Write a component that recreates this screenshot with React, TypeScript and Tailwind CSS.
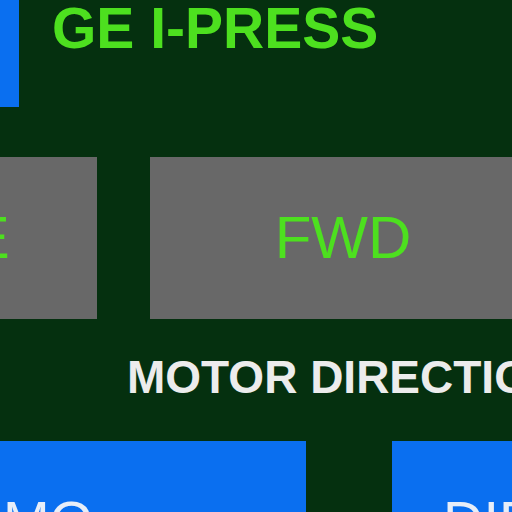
export default function App() {
  return (
    <div className="w-[512px] h-[512px] overflow-hidden bg-[#05300f] font-['Liberation_Sans',Arial,sans-serif]">
      <div className="flex h-[107px] items-start">
        <div className="w-[19px] h-[107px] bg-[#0a6ff0] shrink-0" />
        <div className="ml-[33px] text-[57px] leading-none font-bold text-[#4de01f] whitespace-nowrap">
          GE I-PRESS
        </div>
      </div>
      <div className="mt-[50px] flex gap-[53px] h-[162px] -ml-[364px]">
        <div className="w-[461px] shrink-0 bg-[#686868] flex items-center justify-center text-[60px] text-[#4de01f] leading-none whitespace-nowrap">
          REVERSE
        </div>
        <div className="w-[386px] shrink-0 bg-[#686868] flex items-center justify-center text-[60px] text-[#4de01f] leading-none">
          FWD
        </div>
      </div>
      <div className="mt-[35px] pl-[127px] text-[46px] leading-none font-bold text-[#ececec] whitespace-nowrap">
        MOTOR DIRECTION
      </div>
      <div className="mt-[41px] flex gap-[86px] h-[120px]">
        <div className="w-[306px] shrink-0 bg-[#0a6ff0] pl-[3px] pt-[52px] text-[56px] leading-none text-[#e8eef8] whitespace-nowrap">
          MO
        </div>
        <div className="w-[300px] shrink-0 bg-[#0a6ff0] pl-[51px] pt-[52px] text-[56px] leading-none text-[#e8eef8] whitespace-nowrap">
          DIR
        </div>
      </div>
    </div>
  );
}
